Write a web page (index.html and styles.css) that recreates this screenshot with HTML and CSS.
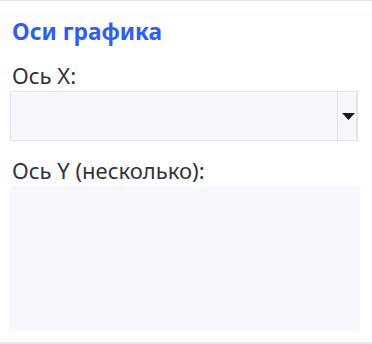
FILE: index.html
```html
<!DOCTYPE html>
<html lang="ru">
<head>
  <meta charset="UTF-8">
  <title>Оси графика</title>
  <link rel="stylesheet" href="styles.css">
</head>
<body>
  <div class="panel">
    <h3>Оси графика</h3>
    <label class="field-label">Ось X:</label>
    <div class="select-box">
      <div class="select-value"></div>
      <div class="select-arrow">
        <svg width="13" height="7" viewBox="0 0 13 7"><polygon points="0,0 13,0 6.5,7" fill="#151a2b"/></svg>
      </div>
    </div>
    <label class="field-label">Ось Y (несколько):</label>
    <div class="multi-list"></div>
  </div>
</body>
</html>
```

FILE: styles.css
```css
body {
  margin: 0;
  font-family: "Noto Sans", "Open Sans", sans-serif;
  background: #fff;
}
.panel {
  border-top: 1px solid #e2e8f0;
  border-bottom: 2px solid #e2e8f0;
  padding: 16px 12px 11px 10px;
  height: 314px;
}
h3 {
  margin: 0 0 13px 2px;
  font-size: 22.7px;
  font-weight: bold;
  color: #2f5ef3;
  line-height: 30px;
}
.field-label {
  display: block;
  font-size: 22px;
  color: #2f333b;
  line-height: 30px;
  margin-left: 2px;
  margin-bottom: 1px;
}
.select-box {
  display: flex;
  height: 48px;
  margin-right: 2px;
  border: 1px solid #dce3ee;
  box-shadow: inset 0 0 0 1px #fff;
  background: #f5f7fb;
  margin-bottom: 14px;
}
.select-value {
  flex: 1;
  border-right: 1px solid #e0e0e0;
}
.select-arrow {
  width: 18px;
  display: flex;
  align-items: center;
  justify-content: center;
  padding-top: 1px;
  border-left: 1px solid #fff;
  box-shadow: inset -1px 0 0 #e4e4e4;
}
.multi-list {
  margin-top: 1px;
  height: 145px;
  background: #f5f7fc;
}
```
